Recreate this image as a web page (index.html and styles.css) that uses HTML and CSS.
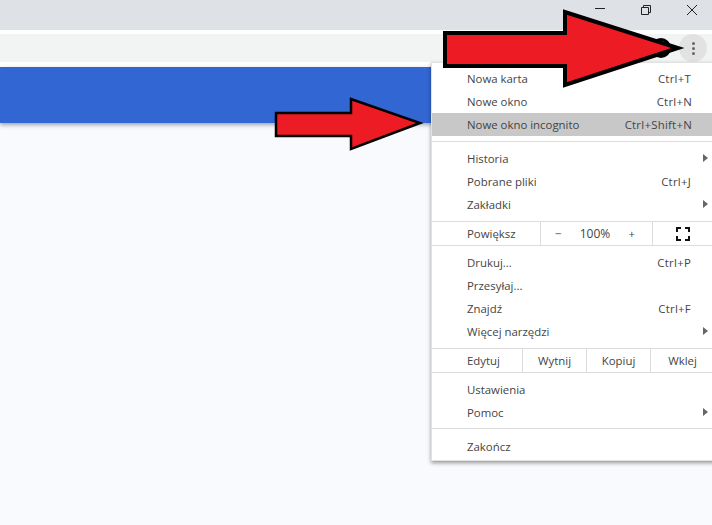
FILE: index.html
```html
<!DOCTYPE html>
<html lang="pl">
<head>
<meta charset="utf-8">
<title>Menu przeglądarki</title>
<link rel="stylesheet" href="styles.css">
</head>
<body>
<div class="titlebar">
  <svg class="win-icon" width="14" height="14" viewBox="0 0 14 14"><path d="M2 5.500H12" stroke="#222" fill="none"/></svg>
  <svg class="win-icon" width="14" height="14" viewBox="0 0 14 14"><path d="M2.500 4.500H9.500V11.500H2.500ZM4.500 4.500V2.500H11.500V9.500H9.500" stroke="#222" fill="none"/></svg>
  <svg class="win-icon" width="14" height="14" viewBox="0 0 14 14"><path d="M2 2L12 12M12 2L2 12" stroke="#222" fill="none"/></svg>
</div>
<div class="toolbar">
  <div class="avatar"></div>
  <div class="dots"><i></i><i></i><i></i></div>
</div>
<div class="banner"></div>

<div class="menu">
  <div class="item"><span>Nowa karta</span><span class="key key-t">Ctrl+T</span></div>
  <div class="item"><span>Nowe okno</span><span class="key">Ctrl+N</span></div>
  <div class="item active"><span>Nowe okno incognito</span><span class="key">Ctrl+Shift+N</span></div>
  <div class="sep"></div>
  <div class="item"><span>Historia</span><span class="tri"></span></div>
  <div class="item"><span>Pobrane pliki</span><span class="key key-t">Ctrl+J</span></div>
  <div class="item"><span>Zakładki</span><span class="tri"></span></div>
  <div class="sep"></div>
  <div class="row zoom-row">
    <span class="cell label">Powiększ</span>
    <span class="cell zoom"><span>−</span><span class="pct">100%</span><span>+</span></span>
    <span class="cell full"><svg width="14" height="14" viewBox="0 0 14 14"><path d="M1 5V1H5M9 1H13V5M13 9V13H9M5 13H1V9" stroke="#111" stroke-width="2" fill="none"/></svg></span>
  </div>
  <div class="sep"></div>
  <div class="item"><span>Drukuj...</span><span class="key key-t">Ctrl+P</span></div>
  <div class="item"><span>Przesyłaj...</span></div>
  <div class="item"><span>Znajdź</span><span class="key key-t">Ctrl+F</span></div>
  <div class="item"><span>Więcej narzędzi</span><span class="tri"></span></div>
  <div class="sep"></div>
  <div class="row edit-row">
    <span class="cell label">Edytuj</span>
    <span class="cell act">Wytnij</span>
    <span class="cell act">Kopiuj</span>
    <span class="cell act">Wklej</span>
  </div>
  <div class="sep"></div>
  <div class="item"><span>Ustawienia</span></div>
  <div class="item"><span>Pomoc</span><span class="tri"></span></div>
  <div class="sep sep-end"></div>
  <div class="item"><span>Zakończ</span></div>
</div>

<svg class="arrows" width="712" height="525" viewBox="0 0 712 525">
  <polygon points="445,33 565,33 565,12 678,48 565,85 565,66 445,66" fill="#ed1c24" stroke="#000" stroke-width="4" stroke-linejoin="miter"/>
  <polygon points="276,113 351,113 351,99 420,123 351,149 351,136 276,136" fill="#ed1c24" stroke="#000" stroke-width="2.500" stroke-linejoin="miter"/>
</svg>
</body>
</html>
```
FILE: styles.css
```css
* { box-sizing: border-box; }
html, body { margin: 0; padding: 0; }
body {
  width: 712px;
  height: 525px;
  overflow: hidden;
  position: relative;
  background: #f8fafd;
  font-family: "Open Sans", "Liberation Sans", sans-serif;
  font-size: 11.4px;
  color: #444;
}
.titlebar {
  height: 30px;
  background: #dee1e6;
  display: flex;
  justify-content: flex-end;
  align-items: flex-start;
  gap: 32px;
  padding: 3px 13px 0 0;
}
.toolbar {
  height: 37px;
  border-top: 4px solid #fff;
  border-bottom: 5px solid #fff;
  background: #f2f3f3;
  display: flex;
  justify-content: flex-end;
  align-items: center;
  gap: 8px;
  padding-right: 5px;
}
.avatar {
  width: 20px;
  height: 20px;
  border-radius: 50%;
  border: 3px solid #000;
}
.dots {
  width: 28px;
  height: 28px;
  border-radius: 50%;
  background: #e2e2e2;
  display: flex;
  flex-direction: column;
  align-items: center;
  justify-content: center;
  gap: 2px;
}
.dots i {
  width: 3px;
  height: 3px;
  border-radius: 50%;
  background: #666;
}
.banner {
  height: 56px;
  background: #3166d3;
  box-shadow: 0 2px 4px rgba(70, 80, 100, .5);
}
.menu {
  position: absolute;
  left: 431px;
  top: 62px;
  width: 300px;
  height: 399px;
  background: #fff;
  padding: 4px 0 3px;
  border: 1px solid #e2e2e2;
  border-right: 0;
  box-shadow: 0 2px 4px rgba(0, 0, 0, .4);
}
.item {
  height: 23px;
  display: flex;
  align-items: center;
  padding-left: 35px;
  position: relative;
}
.item.active { background: #c8c8c8; }
.key {
  position: absolute;
  right: 39px;
  letter-spacing: .25px;
}
.key-t { right: 40px; }
.tri {
  position: absolute;
  left: 271px;
  top: 7px;
  width: 0;
  height: 0;
  border-left: 5px solid #666;
  border-top: 4.500px solid transparent;
  border-bottom: 4.500px solid transparent;
}
.sep {
  height: 1px;
  margin: 5px 0;
  background: #dcdcdc;
}
.sep-end { margin: 4px 0 6px; }
.row {
  height: 23px;
  margin: -5px 0;
  display: flex;
  align-items: center;
}
.cell {
  height: 100%;
  display: flex;
  align-items: center;
  justify-content: center;
  border-left: 1px solid #dcdcdc;
}
.cell.label {
  border-left: 0;
  justify-content: flex-start;
  padding-left: 35px;
}
.zoom-row .label { width: 108px; }
.zoom { width: 112px; justify-content: space-between; padding: 0 17px 0 14px; }
.pct { font-size: 12px; }
.full { width: 62px; justify-content: flex-start; padding-left: 23px; }
.edit-row .label { width: 90px; }
.act { width: 64px; }
.arrows {
  position: absolute;
  left: 0;
  top: 0;
}
```
